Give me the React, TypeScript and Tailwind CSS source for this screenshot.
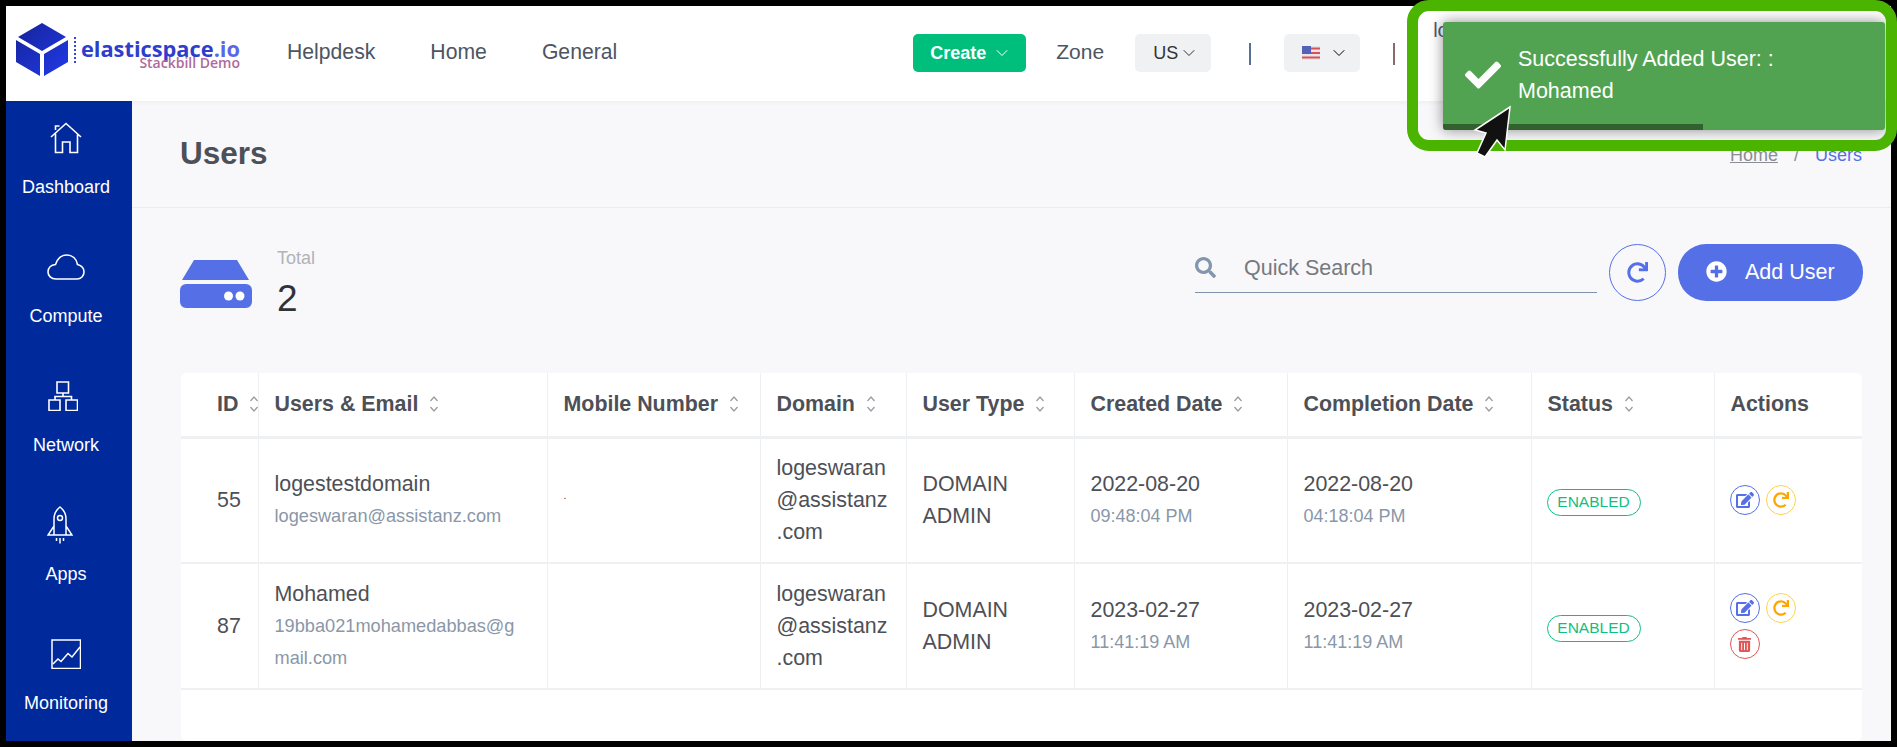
import { ChevronDown } from "lucide-react";
import { FaCheck, FaEdit, FaPlusCircle, FaRedo, FaSearch, FaTrashAlt } from "react-icons/fa";

const HomeIcon = () => (
  <svg width="32" height="32" viewBox="0 0 32 32" fill="none" stroke="white" strokeWidth="1.6">
    <path d="M1 15 16 1.5 31 15M5.5 8V4h4M5.5 11.5V30.5H12.5V20H20V30.5H27.5V11.5" />
  </svg>
);

const CloudIcon = () => (
  <svg width="38" height="26" viewBox="0 0 38 26" fill="none" stroke="white" strokeWidth="1.6">
    <path d="M9 25C4 25 1 21.500 1 18C1 14 4 11 8.500 10.500C10.500 4.500 14 1 19.500 1C25.500 1 29.500 5 30.500 10.500C34.500 11.500 37 14.500 37 18C37 22 34 25 30 25Z" />
  </svg>
);

const NetworkIcon = () => (
  <svg width="30" height="30" viewBox="0 0 30 30" fill="none" stroke="white" strokeWidth="1.6" className="-ml-[7px]">
    <path d="M9 1H20.500V12H9ZM1 19H12V29.500H1ZM18 19H29.500V29.500H18ZM15 12V15.500M7 19V15.500H23.500V19" />
  </svg>
);

const RocketIcon = () => (
  <svg width="26" height="38" viewBox="0 0 26 38" fill="none" stroke="white" strokeWidth="1.5" className="-ml-[12px]">
    <path d="M13 1C9 4 7 8 7 13V29H19V13C19 8 17 4 13 1ZM7 20 1 29H25L19 20M9.500 32V35M13 32V37.500M16.500 32V35" />
    <circle cx="13" cy="12" r="2.500" />
  </svg>
);

const ChartIcon = () => (
  <svg width="30" height="30" viewBox="0 0 30 30" fill="none" stroke="white" strokeWidth="1.5">
    <path d="M1 1H29.500V29.500H1Z" />
    <path d="M2 25 7 20 10 22.500 17 14.500 21 18 29 8" />
  </svg>
);

const Logo = () => (
  <div className="flex items-start w-[240px] shrink-0 pl-[10px] pt-[17px]">
    <svg width="52" height="53" viewBox="0 0 52 53">
      <defs>
        <linearGradient id="cube" x1="0" y1="0" x2="1" y2="1">
          <stop offset="0" stopColor="#16239a" />
          <stop offset="1" stopColor="#213ae8" />
        </linearGradient>
      </defs>
      <path fill="url(#cube)" d="M26 0 50 14 26 28 2 14ZM0 17 24 31V53L0 39ZM52 17 28 31V53L52 39Z" />
    </svg>
    <div className="ml-[6px] mt-[14px] h-[26px] border-l-2 border-dotted border-[#3347d8]" />
    <div className="ml-[5px] mt-[18px] w-[159px] flex flex-col items-end font-['Open_Sans',sans-serif]">
      <span className="text-[21.800px] leading-[15px] font-bold text-[#2e3ecb]">
        elasticspace<span className="text-[#5a68e6]">.io</span>
      </span>
      <span className="text-[14px] leading-[13px] font-semibold text-[#ae6a9c]">Stackbill Demo</span>
    </div>
  </div>
);

const SideItem = ({ icon, label }: { icon: React.ReactNode; label: string }) => (
  <div className="flex flex-col items-center h-[129px]">
    <div className="h-[40px] flex items-center justify-center">{icon}</div>
    <div className="mt-[16px] h-[26px] leading-[26px] text-[18px] text-white">{label}</div>
  </div>
);

const Sort = () => (
  <svg width="10" height="18" viewBox="0 0 10 18" fill="none" stroke="#9a9ea4" strokeWidth="1.3" className="shrink-0">
    <path d="M1.500 6 5 2 8.500 6M1.500 12 5 16 8.500 12" />
  </svg>
);

const Th = ({ label, w, pl = "pl-4", sort = true }: { label: string; w: string; pl?: string; sort?: boolean }) => (
  <th className={`${w} ${pl} h-[64px] border-r border-b-[3px] border-r-[#eeeff1] border-b-[#eff0f1] last:border-r-0 text-left overflow-hidden`}>
    <div className="flex items-center gap-[11px] text-[21.400px] font-bold text-[#4d5056] whitespace-nowrap">
      {label}
      {sort && <Sort />}
    </div>
  </th>
);

const Round = ({ color, children }: { color: string; children: React.ReactNode }) => (
  <span className={`w-[30px] h-[30px] rounded-full border flex items-center justify-center ${color}`}>{children}</span>
);

const users = [
  {
    id: "55",
    name: "logestestdomain",
    email: "logeswaran@assistanz.com",
    mobile: ".",
    created: "2022-08-20",
    createdAt: "09:48:04 PM",
    completedAt: "04:18:04 PM",
    completed: "2022-08-20",
    canDelete: false,
  },
  {
    id: "87",
    name: "Mohamed",
    email: "19bba021mohamedabbas@gmail.com",
    mobile: "",
    created: "2023-02-27",
    createdAt: "11:41:19 AM",
    completedAt: "11:41:19 AM",
    completed: "2023-02-27",
    canDelete: true,
  },
];

export default function App() {
  return (
    <div className="relative w-[1897px] h-[747px] overflow-hidden bg-black p-[6px] font-['Liberation_Sans',Arial,sans-serif]">
      <div className="flex flex-col w-full h-full bg-[#f8f8fb]">
        <header className="flex items-start h-[95px] shrink-0 bg-white shadow-[0_1px_6px_rgba(0,0,0,0.05)] z-10">
          <Logo />
          <nav className="flex h-[92px] items-center ml-[41px] gap-[55px] text-[21.200px] text-[#4d5563]">
            <span>Helpdesk</span>
            <span>Home</span>
            <span>General</span>
          </nav>
          <button className="ml-[296px] mt-[28px] w-[113px] h-[38px] rounded-[5px] bg-[#00bf7d] text-white text-[18px] font-bold flex items-center pl-[17px] gap-[6px]">
            Create <ChevronDown size={20} strokeWidth={1.2} />
          </button>
          <span className="ml-[30px] mt-[28px] h-[36px] leading-[36px] text-[21px] text-[#4d5563]">Zone</span>
          <span className="ml-[31px] mt-[28px] w-[76px] h-[38px] rounded-[5px] bg-[#f0f1f2] text-[18px] text-[#333] flex items-center pl-[18px] gap-[1px]">
            US <ChevronDown size={20} strokeWidth={1.2} />
          </span>
          <span className="ml-[38px] mt-[37px] w-[2px] h-[22px] bg-[#5b6f95]" />
          <span className="ml-[33px] mt-[28px] w-[76px] h-[38px] rounded-[5px] bg-[#f0f1f2] flex items-center pl-[18px] gap-[9px]">
            <svg width="18" height="14" viewBox="0 0 18 14">
              <rect width="18" height="14" fill="#e9e4e6" />
              <path d="M0 2.500H18M0 7H18M0 11.500H18" stroke="#d8505a" strokeWidth="2" />
              <rect width="9" height="8" fill="#5560b8" />
            </svg>
            <ChevronDown size={20} strokeWidth={1.2} />
          </span>
          <span className="ml-[33px] mt-[37px] w-[2px] h-[22px] bg-[#8a6a6a]" />
          <span className="ml-[38px] mt-[9px] text-[20px] text-[#4d5a70] whitespace-nowrap">logestestdomain admin</span>
        </header>

        <div className="flex flex-1 min-h-0">
          <aside className="w-[126px] shrink-0 bg-[#002a9c] pt-[17px] pr-[6px]">
            <SideItem icon={<HomeIcon />} label="Dashboard" />
            <SideItem icon={<CloudIcon />} label="Compute" />
            <SideItem icon={<NetworkIcon />} label="Network" />
            <SideItem icon={<RocketIcon />} label="Apps" />
            <SideItem icon={<ChartIcon />} label="Monitoring" />
          </aside>

          <main className="flex flex-col flex-1 min-w-0">
            <div className="h-[107px] shrink-0 border-b border-[#ececef] pl-[48px] pr-[29px] flex items-center justify-between">
              <h1 className="text-[31.500px] font-bold text-[#4d5056]">Users</h1>
              <div className="text-[18px] mt-[3px] flex gap-[16px]">
                <span className="text-[#8a8d93] underline">Home</span>
                <span className="text-[#8a8d93]">/</span>
                <span className="text-[#5570e6]">Users</span>
              </div>
            </div>

            <div className="flex items-start pl-[48px] pr-[28px] pt-[36px] h-[165px] shrink-0">
              <svg width="72" height="48" viewBox="0 0 72 48" className="mt-[16px]" fill="#5570e6">
                <path d="M14 0H57L69 20H2ZM6 24H66A6 6 0 0 1 72 30V42A6 6 0 0 1 66 48H6A6 6 0 0 1 0 42V30A6 6 0 0 1 6 24Z" />
                <circle cx="48.500" cy="36" r="4.500" fill="white" />
                <circle cx="60" cy="36" r="4.500" fill="white" />
              </svg>
              <div className="ml-[25px] mt-[2px]">
                <div className="text-[18px] leading-[24px] text-[#b0b3b8]">Total</div>
                <div className="text-[37px] mt-[5px] leading-[48px] text-[#2f3237]">2</div>
              </div>
              <div className="ml-auto w-[402px] h-[50px] border-b border-[#7f93ab] flex items-center -mt-[1px]">
                <FaSearch size={21} className="text-[#8296ad]" />
                <span className="ml-[28px] mt-[2px] text-[21.500px] text-[#76797e]">Quick Search</span>
              </div>
              <button className="ml-[12px] w-[57px] h-[57px] rounded-full border border-[#5570e6] flex items-center justify-center">
                <FaRedo size={21} className="text-[#5570e6]" />
              </button>
              <button className="ml-[12px] w-[185px] h-[57px] rounded-[28px] bg-[#5570e6] text-white text-[21.500px] flex items-center pl-[28px] gap-[18px]">
                <FaPlusCircle size={21} className="-mt-[2px]" />
                <span className="-mt-[1px]">Add User</span>
              </button>
            </div>

            <div className="ml-[49px] mr-[29px] flex-1 bg-white rounded-[6px] overflow-hidden">
              <table className="w-full table-fixed border-collapse">
                <thead>
                  <tr>
                    <Th label="ID" w="w-[77px]" pl="pl-9" />
                    <Th label="Users & Email" w="w-[289px]" />
                    <Th label="Mobile Number" w="w-[213px]" />
                    <Th label="Domain" w="w-[146px]" />
                    <Th label="User Type" w="w-[168px]" />
                    <Th label="Created Date" w="w-[213px]" />
                    <Th label="Completion Date" w="w-[244px]" />
                    <Th label="Status" w="w-[183px]" />
                    <Th label="Actions" w="w-[148px]" sort={false} />
                  </tr>
                </thead>
                <tbody className="text-[21.400px] leading-[32px] text-[#4d5056]">
                  {users.map((u) => (
                    <tr key={u.id} className="h-[126px] border-b-2 border-[#eff0f1]">
                      <td className="pl-9 border-r border-[#eeeff1]">{u.id}</td>
                      <td className="pl-4 pr-[28px] border-r border-[#eeeff1]">
                        <div>{u.name}</div>
                        <div className="text-[18.200px] text-[#8a97a8] break-all">{u.email}</div>
                      </td>
                      <td className="px-4 border-r border-[#eeeff1] text-[10px]">
                        <div className="-mt-[8px] text-[#333]">{u.mobile}</div>
                      </td>
                      <td className="px-4 border-r border-[#eeeff1]">
                        logeswaran<wbr />@assistanz<wbr />.com
                      </td>
                      <td className="px-4 border-r border-[#eeeff1]">DOMAIN ADMIN</td>
                      <td className="px-4 border-r border-[#eeeff1]">
                        <div>{u.created}</div>
                        <div className="text-[18px] text-[#8a97a8]">{u.createdAt}</div>
                      </td>
                      <td className="px-4 border-r border-[#eeeff1]">
                        <div>{u.completed}</div>
                        <div className="text-[18px] text-[#8a97a8]">{u.completedAt}</div>
                      </td>
                      <td className="pl-[15px] pr-4 border-r border-[#eeeff1]">
                        <span className="inline-flex items-center justify-center w-[94px] h-[27px] rounded-full border-[1.5px] border-[#0fbf82] text-[15.500px] text-[#0fbf82]">
                          ENABLED
                        </span>
                      </td>
                      <td className="pl-[15px]">
                        <div className="flex flex-wrap gap-[6px] w-[70px]">
                          <Round color="border-[#5570e6] text-[#5570e6]"><FaEdit size={18} /></Round>
                          <Round color="border-[#ffd24d] text-[#ffa500]"><FaRedo size={16} /></Round>
                          {u.canDelete && <Round color="border-[#e05555] text-[#e05555]"><FaTrashAlt size={15} /></Round>}
                        </div>
                      </td>
                    </tr>
                  ))}
                </tbody>
              </table>
            </div>
          </main>
        </div>
      </div>

      {/* toast + annotation frame on top of the page */}
      <div className="absolute left-[1443px] top-[22px] w-[442px] h-[108px] bg-[#51a351] shadow-[0_0_14px_rgba(0,0,0,0.45)] rounded-[3px] overflow-hidden z-20">
        <div className="flex items-center h-[102px] pt-[3px]">
          <FaCheck size={36} className="ml-[22px] text-white shrink-0" />
          <div className="ml-[17px] w-[330px] text-[21.500px] leading-[32px] text-white">Successfully Added User: : Mohamed</div>
        </div>
        <div className="h-[6px] w-[260px] bg-[#33602f]" />
      </div>
      <div className="absolute left-[1407px] top-0 w-[490px] h-[151px] border-[11px] border-[#4ab400] rounded-[22px] z-30" />
      <svg width="48" height="62" viewBox="0 0 48 62" className="absolute left-[1470px] top-[100px] z-40">
        <path d="M40 7 5 30 16 33 7 53 15 57 27 40 35 50Z" fill="#111" stroke="white" strokeWidth="1.500" />
      </svg>
    </div>
  );
}
